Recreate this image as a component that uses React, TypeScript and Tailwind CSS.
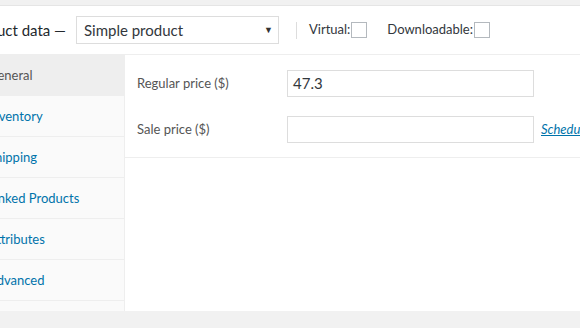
import React from "react";

const TABS = [
  { label: "General", active: true },
  { label: "Inventory" },
  { label: "Shipping" },
  { label: "Linked Products" },
  { label: "Attributes" },
  { label: "Advanced" },
];

export default function App() {
  return (
    <div
      className="h-[328px] w-[580px] overflow-hidden bg-[#f1f1f1] pt-[5px] text-[13px] text-[#555]"
      style={{ fontFamily: "Lato, 'Open Sans', sans-serif" }}
    >
      <div className="h-[306px] border-t border-[#e5e5e5] bg-white">
        <div className="flex h-[49px] items-center border-b border-[#eee]">
          <span className="-ml-[34px] whitespace-nowrap text-[15px] text-[#23282d]">
            Product data —
          </span>
          <div className="ml-[10px] flex h-[28px] w-[203px] items-center justify-between border border-[#ddd] pl-[7px] pr-[5px] text-[15px] text-[#32373c]">
            <span>Simple product</span>
            <span className="text-[9px] text-[#333]">▼</span>
          </div>
          <div className="ml-[17px] h-[17px] w-px bg-[#ddd]" />
          <label className="ml-[12px] flex items-center text-[#32373c]">
            Virtual:
            <span className="ml-px h-[16px] w-[16px] border border-[#b4b9be]" />
          </label>
          <label className="ml-[20px] flex items-center text-[#32373c]">
            Downloadable:
            <span className="ml-px h-[16px] w-[16px] border border-[#b4b9be]" />
          </label>
        </div>
        <div className="flex h-[256px]">
          <ul className="w-[125px] shrink-0 border-r border-[#eee] bg-[#fafafa]">
            {TABS.map((t) => (
              <li
                key={t.label}
                className={`flex h-[41px] items-center border-b border-[#eee] pt-[2px] ${
                  t.active ? "bg-[#eee] text-[#555]" : "text-[#0073aa]"
                }`}
              >
                <span className="-ml-[12px] whitespace-nowrap">{t.label}</span>
              </li>
            ))}
          </ul>
          <div className="flex-1">
            <div className="flex flex-col gap-[19px] border-b border-[#eee] pb-[14px] pl-[12px] pt-[15px]">
              <div className="flex items-center">
                <span className="w-[150px]">Regular price ($)</span>
                <div className="flex h-[27px] w-[247px] items-center border border-[#ddd] px-[5px] text-[15px] text-[#32373c]">
                  47.3
                </div>
              </div>
              <div className="flex items-center">
                <span className="w-[150px]">Sale price ($)</span>
                <div className="h-[27px] w-[247px] border border-[#ddd]" />
                <a className="ml-[7px] whitespace-nowrap italic text-[#0073aa] underline">
                  Schedule
                </a>
              </div>
            </div>
          </div>
        </div>
      </div>
    </div>
  );
}
